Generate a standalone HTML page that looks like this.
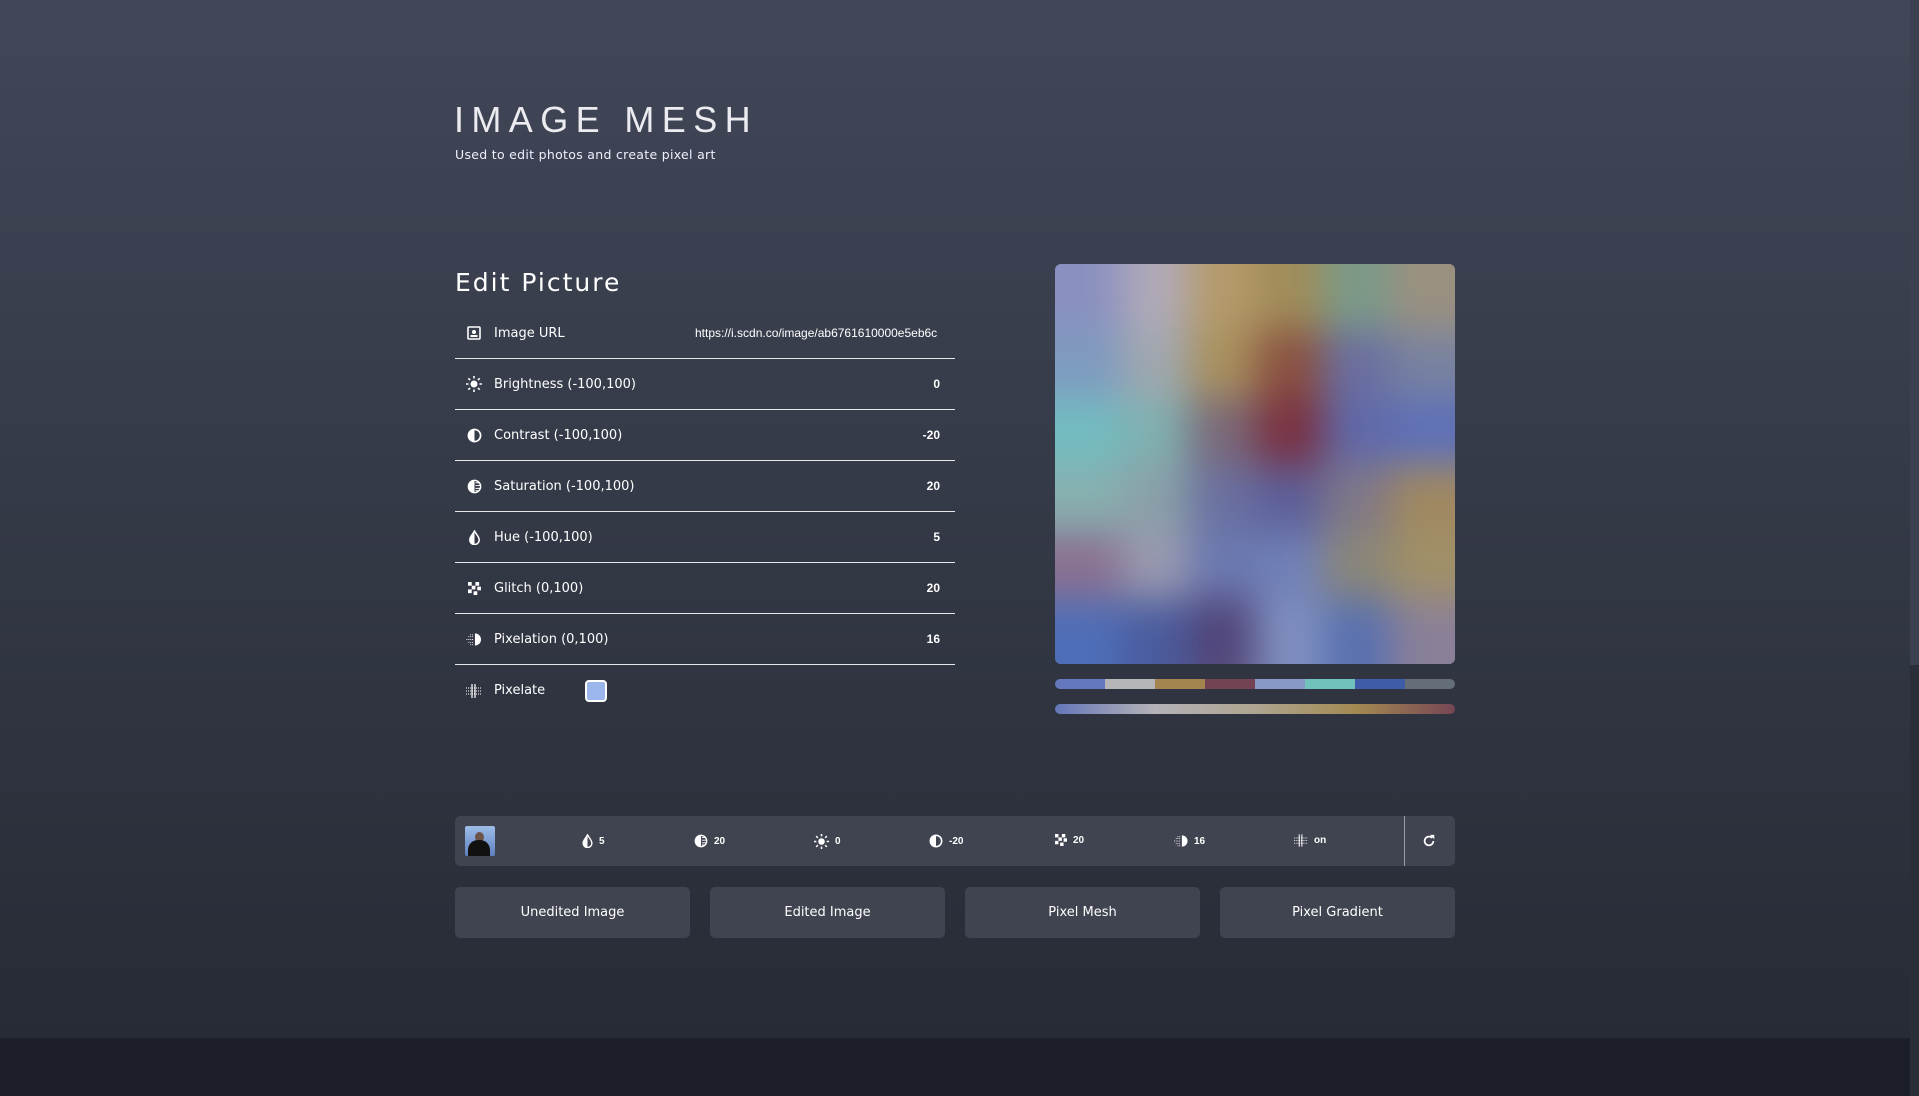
<!DOCTYPE html>
<html><head><meta charset="utf-8">
<style>
*{margin:0;padding:0;box-sizing:border-box}
html,body{width:1919px;height:1096px;overflow:hidden}
body{background:linear-gradient(#414758 0px,#272b35 1038px);font-family:"DejaVu Sans","Liberation Sans",sans-serif;color:#fff;position:relative}
.footer{position:absolute;left:0;top:1038px;width:1910px;height:58px;background:#1c1f27}
.sb{position:absolute;left:1910px;top:0;width:9px;height:1096px;background:#2a2e38}
.sbt{position:absolute;left:1910px;top:0;width:9px;height:665px;background:#3c4150}
h1{position:absolute;left:454px;top:99px;font-family:"Liberation Sans",sans-serif;font-size:36px;letter-spacing:7.4px;color:#ebebf0;font-weight:normal}
.sub{position:absolute;left:455px;top:147px;font-size:12.5px;letter-spacing:.3px;color:#eef}
h2{position:absolute;left:455px;top:268px;font-weight:normal;font-size:25px;letter-spacing:2px}
.row{position:absolute;left:455px;width:500px;height:51px;border-bottom:1.5px solid #e8e8ec;display:flex;align-items:center;font-size:13px}
.row.last{border-bottom:none}
.ic{width:16px;height:16px;margin-left:11px;margin-right:12px;display:flex;align-items:center;justify-content:center}
.val{position:absolute;right:15px;font-family:"Liberation Sans",sans-serif;font-weight:bold;font-size:12px}
.url{font-weight:normal;font-size:12px;width:245px;overflow:hidden;white-space:nowrap;right:15px}
.cb{position:absolute;left:130px;width:22px;height:22px;border:2px solid #fff;border-radius:4px;background:#9ab6ea}
.img{position:absolute;left:1055px;top:264px;width:400px;height:400px;border-radius:6px;overflow:hidden;background:#6a78b0}
.g{position:absolute;left:-67px;top:-67px;width:536px;height:536px;display:grid;grid-template-columns:repeat(8,67px);grid-template-rows:repeat(8,67px);filter:blur(20px)}
.pal{position:absolute;left:1055px;top:679px;width:400px;height:10px;border-radius:5px;overflow:hidden;display:flex}
.pal i{flex:1}
.grad{position:absolute;left:1055px;top:704px;width:400px;height:10px;border-radius:5px;background:linear-gradient(90deg,#6577b8,#b5b2b8 25%,#aea490 50%,#a38a52 75%,#764554)}
.bar{position:absolute;left:455px;top:816px;width:1000px;height:50px;background:#404350;border-radius:5px;font-size:10px;font-family:"Liberation Sans",sans-serif;font-weight:bold}
.bar .it{position:absolute;top:18px;display:flex;align-items:center;gap:6px}
.thumb{position:absolute;left:10px;top:10px;width:30px;height:30px;border-radius:2px;background:linear-gradient(#9dbde8,#5d80c0);overflow:hidden}
.thumb:after{content:"";position:absolute;left:3px;top:14px;width:22px;height:18px;background:#111;border-radius:10px 10px 0 0}
.thumb:before{content:"";position:absolute;left:10px;top:6px;width:9px;height:10px;background:#6a5548;border-radius:50%}
.sep{position:absolute;left:949px;top:0;width:1px;height:50px;background:#9a9ca8}
.btn{position:absolute;top:887px;width:235px;height:51px;background:#404350;border-radius:5px;display:flex;align-items:center;justify-content:center;font-size:13px}
</style></head><body>
<h1>IMAGE MESH</h1>
<div class="sub">Used to edit photos and create pixel art</div>
<h2>Edit Picture</h2>

<div class="row" style="top:308px"><span class="ic"><svg width="14" height="14" viewBox="0 0 14 14"><rect x="1" y="1" width="12" height="12" rx="1" fill="none" stroke="#fff" stroke-width="1.6"/><circle cx="7" cy="6" r="2" fill="#fff"/><rect x="3.5" y="9" width="7" height="2" fill="#fff"/></svg></span>Image URL<span class="val url">https://i.scdn.co/image/ab6761610000e5eb6c</span></div>
<div class="row" style="top:359px"><span class="ic"><svg width="16" height="16" viewBox="0 0 16 16"><circle cx="8" cy="8" r="3.5" fill="#fff"/><g stroke="#fff" stroke-width="1.6"><path d="M8 0v2.5M8 13.5V16M0 8h2.5M13.5 8H16M2.3 2.3l1.8 1.8M11.9 11.9l1.8 1.8M2.3 13.7l1.8-1.8M11.9 4.1l1.8-1.8"/></g></svg></span>Brightness (-100,100)<span class="val">0</span></div>
<div class="row" style="top:410px"><span class="ic"><svg width="15" height="15" viewBox="0 0 16 16"><circle cx="8" cy="8" r="6.5" fill="none" stroke="#fff" stroke-width="1.8"/><path d="M8 1.5a6.5 6.5 0 0 0 0 13z" fill="#fff"/></svg></span>Contrast (-100,100)<span class="val">-20</span></div>
<div class="row" style="top:461px"><span class="ic"><svg width="15" height="15" viewBox="0 0 16 16"><circle cx="8" cy="8" r="6.5" fill="none" stroke="#fff" stroke-width="1.6"/><path d="M8 1.5a6.5 6.5 0 0 0 0 13z" fill="#fff"/><path d="M9 4h4M9 7h5M9 10h5M9 12.5h3" stroke="#fff" stroke-width="1"/></svg></span>Saturation (-100,100)<span class="val">20</span></div>
<div class="row" style="top:512px"><span class="ic"><svg width="13" height="15" viewBox="0 0 12 16"><path d="M6 1C4 5 1 7 1 10.5a5 5 0 0 0 10 0C11 7 8 5 6 1z" fill="none" stroke="#fff" stroke-width="1.6"/><path d="M6 1C4 5 1 7 1 10.5A5 5 0 0 0 6 15.5z" fill="#fff"/></svg></span>Hue (-100,100)<span class="val">5</span></div>
<div class="row" style="top:563px"><span class="ic"><svg width="13" height="13" viewBox="0 0 14 14" fill="#fff"><rect x="0" y="0" width="4" height="4"/><rect x="8" y="0" width="4" height="4"/><rect x="4" y="4" width="4" height="4"/><rect x="10" y="5" width="4" height="4"/><rect x="0" y="8" width="4" height="4"/><rect x="6" y="10" width="4" height="4"/></svg></span>Glitch (0,100)<span class="val">20</span></div>
<div class="row" style="top:614px"><span class="ic"><svg width="16" height="15" viewBox="0 0 16 16"><path d="M9 1.5a6.5 6.5 0 0 1 0 13z" fill="#fff"/><path d="M2 5h6M0 8h8M2 11h6M4 13.5h4M4 3h4" stroke="#fff" stroke-width="1" stroke-dasharray="1 1"/></svg></span>Pixelation (0,100)<span class="val">16</span></div>
<div class="row last" style="top:665px"><span class="ic"><svg width="16" height="14" viewBox="0 0 16 14"><path d="M0 4h16M0 7h16M0 10h16" stroke="#fff" stroke-width="1" stroke-dasharray="1 1"/><path d="M6 0v14M9 0v14" stroke="#fff" stroke-width="1.2"/></svg></span>Pixelate<span class="cb"></span></div>

<div class="img"><div class="g">
<i style="background:#8a90c0"></i><i style="background:#8a90c0"></i><i style="background:#b0aab8"></i><i style="background:#b49a6a"></i><i style="background:#a08c58"></i><i style="background:#7a9a88"></i><i style="background:#9a9080"></i><i style="background:#9a9080"></i>
<i style="background:#8a90c0"></i><i style="background:#8a90c0"></i><i style="background:#b0aab8"></i><i style="background:#b49a6a"></i><i style="background:#a08c58"></i><i style="background:#7a9a88"></i><i style="background:#9a9080"></i><i style="background:#9a9080"></i>
<i style="background:#7e9ac0"></i><i style="background:#7e9ac0"></i><i style="background:#a0a8b0"></i><i style="background:#a8905c"></i><i style="background:#8a5040"></i><i style="background:#6a6ea0"></i><i style="background:#7882a0"></i><i style="background:#7882a0"></i>
<i style="background:#72bcc0"></i><i style="background:#72bcc0"></i><i style="background:#80b0b0"></i><i style="background:#7a6878"></i><i style="background:#7a3040"></i><i style="background:#6068a8"></i><i style="background:#5e70b8"></i><i style="background:#5e70b8"></i>
<i style="background:#88b0b0"></i><i style="background:#88b0b0"></i><i style="background:#8aa0a8"></i><i style="background:#6a70a0"></i><i style="background:#5c5e98"></i><i style="background:#807888"></i><i style="background:#a08860"></i><i style="background:#a08860"></i>
<i style="background:#8a7090"></i><i style="background:#8a7090"></i><i style="background:#9a9ab0"></i><i style="background:#6a78b0"></i><i style="background:#7080b8"></i><i style="background:#8a8678"></i><i style="background:#a09068"></i><i style="background:#a09068"></i>
<i style="background:#4e6eb8"></i><i style="background:#4e6eb8"></i><i style="background:#4a5c9e"></i><i style="background:#504478"></i><i style="background:#8090c0"></i><i style="background:#5870b0"></i><i style="background:#8a8098"></i><i style="background:#8a8098"></i>
<i style="background:#4e6eb8"></i><i style="background:#4e6eb8"></i><i style="background:#4a5c9e"></i><i style="background:#584c7c"></i><i style="background:#8090c0"></i><i style="background:#5870b0"></i><i style="background:#8a8098"></i><i style="background:#8a8098"></i>
</div></div>
<div class="pal"><i style="background:#6479bd"></i><i style="background:#b6b5b8"></i><i style="background:#a3854f"></i><i style="background:#734353"></i><i style="background:#8899c8"></i><i style="background:#71c1bc"></i><i style="background:#3e5ca8"></i><i style="background:#636e78"></i></div>
<div class="grad"></div>

<div class="bar">
<div class="thumb"></div>
<div class="it" style="left:127px"><svg width="11" height="14" viewBox="0 0 12 16"><path d="M6 1C4 5 1 7 1 10.5a5 5 0 0 0 10 0C11 7 8 5 6 1z" fill="none" stroke="#fff" stroke-width="1.6"/><path d="M6 1C4 5 1 7 1 10.5A5 5 0 0 0 6 15.5z" fill="#fff"/></svg>5</div>
<div class="it" style="left:239px"><svg width="14" height="14" viewBox="0 0 16 16"><circle cx="8" cy="8" r="6.5" fill="none" stroke="#fff" stroke-width="1.6"/><path d="M8 1.5a6.5 6.5 0 0 0 0 13z" fill="#fff"/><path d="M9 4h4M9 7h5M9 10h5M9 12.5h3" stroke="#fff" stroke-width="1"/></svg>20</div>
<div class="it" style="left:359px"><svg width="15" height="15" viewBox="0 0 16 16"><circle cx="8" cy="8" r="3.5" fill="#fff"/><path d="M8 0v2.5M8 13.5V16M0 8h2.5M13.5 8H16M2.3 2.3l1.8 1.8M11.9 11.9l1.8 1.8M2.3 13.7l1.8-1.8M11.9 4.1l1.8-1.8" stroke="#fff" stroke-width="1.6"/></svg>0</div>
<div class="it" style="left:474px"><svg width="14" height="14" viewBox="0 0 16 16"><circle cx="8" cy="8" r="6.5" fill="none" stroke="#fff" stroke-width="1.8"/><path d="M8 1.5a6.5 6.5 0 0 0 0 13z" fill="#fff"/></svg>-20</div>
<div class="it" style="left:600px"><svg width="12" height="12" viewBox="0 0 14 14" fill="#fff"><rect x="0" y="0" width="4" height="4"/><rect x="8" y="0" width="4" height="4"/><rect x="4" y="4" width="4" height="4"/><rect x="10" y="5" width="4" height="4"/><rect x="0" y="8" width="4" height="4"/><rect x="6" y="10" width="4" height="4"/></svg>20</div>
<div class="it" style="left:719px"><svg width="14" height="14" viewBox="0 0 16 16"><path d="M9 1.5a6.5 6.5 0 0 1 0 13z" fill="#fff"/><path d="M2 5h6M0 8h8M2 11h6M4 13.5h4M4 3h4" stroke="#fff" stroke-width="1" stroke-dasharray="1 1"/></svg>16</div>
<div class="it" style="left:839px"><svg width="14" height="13" viewBox="0 0 16 14"><path d="M0 4h16M0 7h16M0 10h16" stroke="#fff" stroke-width="1" stroke-dasharray="1 1"/><path d="M6 0v14M9 0v14" stroke="#fff" stroke-width="1.2"/></svg>on</div>
<div class="sep"></div>
<div class="it" style="left:967px"><svg width="14" height="14" viewBox="0 0 16 16"><path d="M13 8a5 5 0 1 1-1.5-3.6" fill="none" stroke="#fff" stroke-width="2"/><path d="M9 1h5v5z" fill="#fff"/></svg></div>
</div>

<div class="btn" style="left:455px">Unedited Image</div>
<div class="btn" style="left:710px">Edited Image</div>
<div class="btn" style="left:965px">Pixel Mesh</div>
<div class="btn" style="left:1220px">Pixel Gradient</div>

<div class="footer"></div>
<div class="sb"></div><div class="sbt"></div>
</body></html>
